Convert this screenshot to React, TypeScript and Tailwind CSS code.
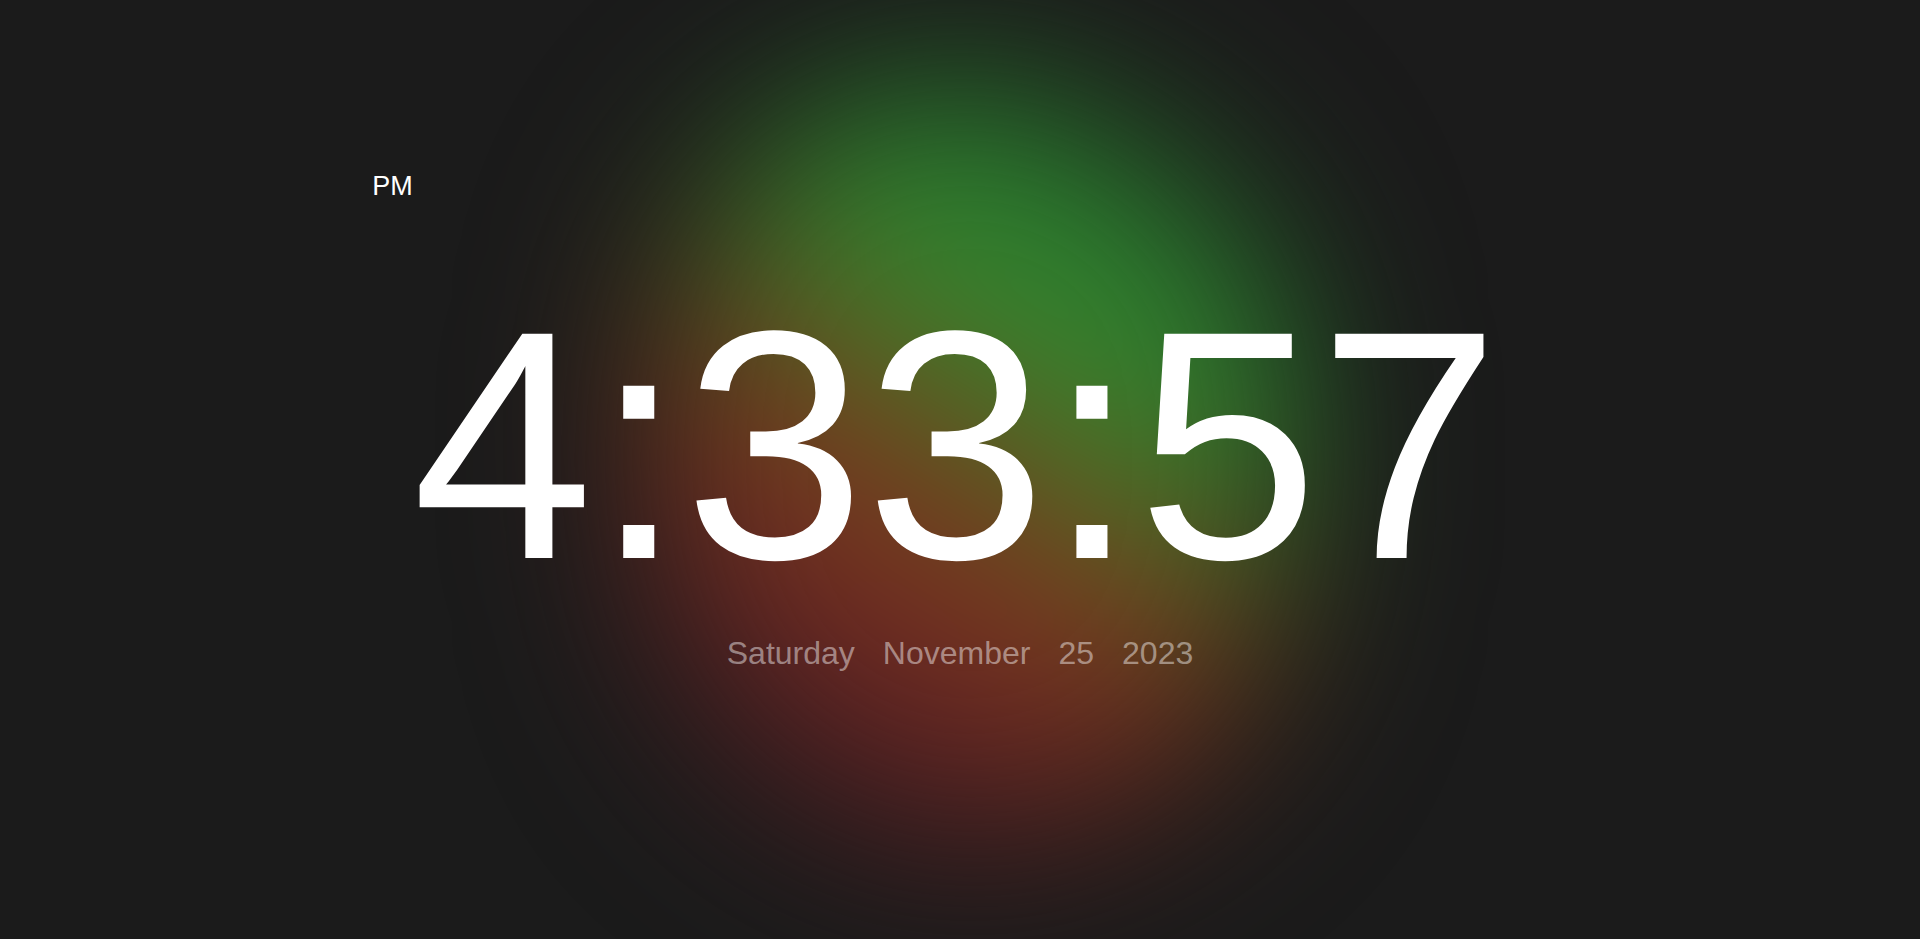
import React from 'react';

const parts = ['Saturday', 'November', '25', '2023'];

const App: React.FC = () => {
  return (
    <div className="relative h-screen w-full overflow-hidden bg-[#1b1b1b] font-['Liberation_Sans',Arial,sans-serif]">
      {/* glow behind the clock */}
      <div className="pointer-events-none absolute left-[650px] top-[80px] h-[760px] w-[640px] rounded-full bg-[linear-gradient(212deg,#1b1b1b_0%,#2c9032_28%,#3e7a2a_40%,#6c4a1c_51%,#7c3220_62%,#5c2024_78%,#2c1c22_100%)] blur-[90px]" />

      <div className="relative flex flex-col items-center pt-[166px]">
        <div className="flex flex-col">
          <div className="-ml-[48px] text-[27px] text-white">PM</div>
          <div className="-ml-[8px] mt-[75px] text-[326px] leading-none text-white">4:33:57</div>
        </div>

        <div className="mt-[21px] flex gap-[28px] text-[32px] text-white/45">
          {parts.map((p) => (
            <span key={p}>{p}</span>
          ))}
        </div>
      </div>
    </div>
  );
};

export default App;
